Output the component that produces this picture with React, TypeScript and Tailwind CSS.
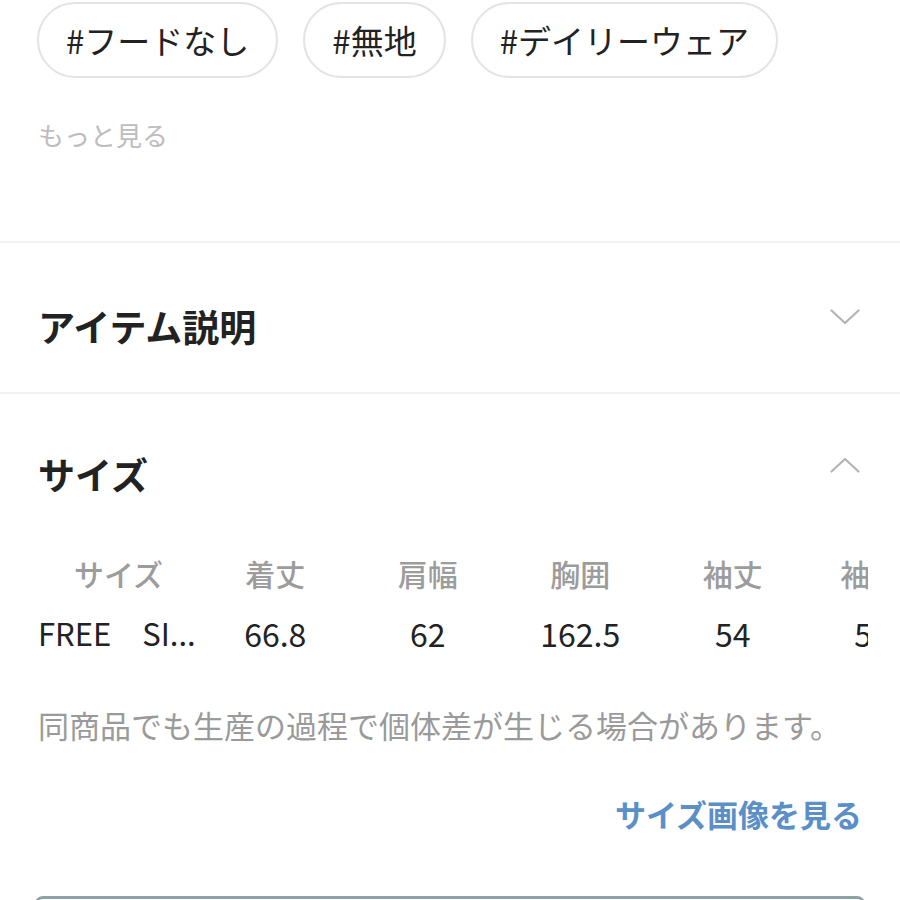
import React from "react";

const tags = ["#フードなし", "#無地", "#デイリーウェア"];

const columns = [
  { label: "サイズ", value: "FREE　SI..." },
  { label: "着丈", value: "66.8" },
  { label: "肩幅", value: "62" },
  { label: "胸囲", value: "162.5" },
  { label: "袖丈", value: "54" },
  { label: "袖口幅", value: "52.5" },
];

function Chevron({ up }: { up?: boolean }) {
  return (
    <svg width="30" height="16" viewBox="0 0 30 16" fill="none">
      <path
        d={up ? "M1.5 14.5 L15 2 L28.5 14.5" : "M1.5 1.5 L15 14 L28.5 1.5"}
        stroke="#b3b3b3"
        strokeWidth="2.2"
        strokeLinecap="round"
        strokeLinejoin="round"
      />
    </svg>
  );
}

export default function App() {
  return (
    <div className="w-[900px] h-[900px] overflow-hidden bg-white font-['Noto_Sans_CJK_JP','Noto_Sans',sans-serif] text-[#222]">
      {/* Tags */}
      <div className="h-[243px] border-b-2 border-[#f2f2f2] px-[37px] pt-[2px]">
        <div className="flex gap-[25px]">
          {tags.map((t) => (
            <div
              key={t}
              className="h-[76px] px-[27px] flex items-center rounded-full border-2 border-[#e3e3e3] text-[33px] leading-[40px]"
            >
              {t}
            </div>
          ))}
        </div>
        <div className="mt-[41px] ml-[1px] text-[26px] leading-[32px] text-[#bdbdbd]">
          もっと見る
        </div>
      </div>

      {/* Item description */}
      <div className="h-[151px] border-b-2 border-[#f2f2f2] px-[38px] pt-[63px] flex justify-between items-start">
        <h2 className="text-[37px] leading-[40px] font-bold">アイテム説明</h2>
        <div className="mt-[3px] mr-[2px]">
          <Chevron />
        </div>
      </div>

      {/* Size */}
      <div className="px-[38px] pt-[60px]">
        <div className="flex justify-between items-start">
          <h2 className="text-[37px] leading-[40px] font-bold">サイズ</h2>
          <div className="mt-[3px] mr-[2px]">
            <Chevron up />
          </div>
        </div>

        <div className="mt-[60px] mr-[-6px] overflow-hidden">
          <div className="flex w-max">
            {columns.map((c, i) => (
              <div
                key={c.label}
                className={i === 0 ? "w-[161px] shrink-0" : "w-[152.5px] shrink-0 text-center"}
              >
                <div className="leading-[38px] text-[30px] font-medium text-[#9c9c9c] text-center">
                  {c.label}
                </div>
                <div
                  className={
                    i === 0
                      ? "mt-[22px] leading-[38px] text-[31px] whitespace-nowrap"
                      : "mt-[22px] leading-[38px] text-[32px]"
                  }
                >
                  {c.value}
                </div>
              </div>
            ))}
          </div>
        </div>

        <p className="mt-[53px] text-[31px] leading-[40px] text-[#9a9a9a] whitespace-nowrap">
          同商品でも生産の過程で個体差が生じる場合があります。
        </p>

        <div className="mt-[49px] flex justify-end">
          <span className="text-[31px] leading-[40px] font-bold text-[#5b8fc7]">
            サイズ画像を見る
          </span>
        </div>
      </div>

      <div className="mx-[35px] mt-[62px] h-[40px] rounded-t-[8px] border-t-[3px] border-x-[2px] border-[#8fa3a6]" />
    </div>
  );
}
